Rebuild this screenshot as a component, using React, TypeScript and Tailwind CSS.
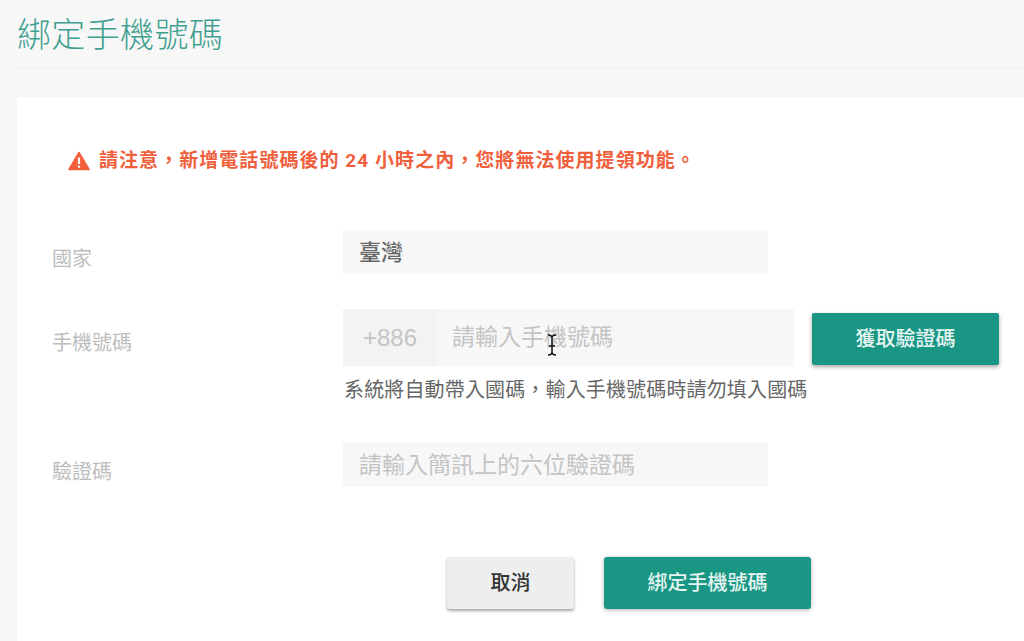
const cjk = "font-['Roboto','Noto_Sans_CJK_TC',sans-serif]";

function Label({ children, className }: { children: string; className: string }) {
  return <div className={`w-[326px] shrink-0 pl-[35px] text-[20px] leading-[28px] text-[#bdbdbd] ${className}`}>{children}</div>;
}

export default function App() {
  return (
    <div className={`h-[641px] w-[1024px] overflow-hidden bg-[#f7f7f7] pl-[17px] ${cjk}`}>
      <header className="h-[68px] border-b border-[#f0f0f0] pt-[11px]">
        <h1 className="text-[34px] font-light leading-[48px] tracking-[0.35px] text-[#3f9f90]">綁定手機號碼</h1>
      </header>

      <main className="mt-[29px] h-[544px] bg-white pt-[51px]">
        <div className="ml-[51px] flex h-[26px] items-center gap-[9px] text-[#f0603c]">
          <svg width="22" height="20" viewBox="0 0 22 20" className="shrink-0">
            <path d="M11 1.5 L21 18.5 H1 Z" fill="#f0603c" stroke="#f0603c" strokeWidth="1.6" strokeLinejoin="round" />
            <rect x="9.9" y="6.5" width="2.2" height="6.5" rx="0.6" fill="#fff" />
            <rect x="9.9" y="14.5" width="2.2" height="2.2" rx="0.6" fill="#fff" />
          </svg>
          <p className="text-[19px] font-bold leading-[26px] tracking-[1.05px] whitespace-nowrap">請注意，新增電話號碼後的 24 小時之內，您將無法使用提領功能。</p>
        </div>

        <div className="mt-[56px] flex items-start">
          <Label className="mt-[15px]">國家</Label>
          <div className="flex h-[44px] w-[425px] items-center bg-[#f7f7f7] px-4 text-[22px] font-medium text-[#666666]">臺灣</div>
        </div>

        <div className="mt-[35px] flex items-start">
          <Label className="mt-[20px]">手機號碼</Label>
          <div className="w-[464px]">
            <div className="relative flex h-[57px] w-[451px] items-center bg-[#f7f7f7] text-[23px]">
              <div className="flex h-full w-[94px] items-center justify-center bg-[#f3f3f3] font-['Liberation_Sans',sans-serif] text-[24px] text-[#c4c4c4]">+886</div>
              <div className="pt-px pl-[15px] text-[#c4c4c4]">請輸入手機號碼</div>
              <svg width="12" height="24" viewBox="0 0 12 24" className="absolute left-[203px] top-[24px]" fill="none" stroke="#111" strokeWidth="1.5">
                <path d="M2 2 C4 2 6 3 6 5 C6 3 8 2 10 2 M6 5 V19 M2 22 C4 22 6 21 6 19 C6 21 8 22 10 22 M3 13 H9" />
              </svg>
            </div>
            <p className="mt-[11px] pl-px text-[20px] leading-[26px] tracking-[0.15px] whitespace-nowrap text-[#666666]">系統將自動帶入國碼，輸入手機號碼時請勿填入國碼</p>
          </div>
          <button className="mt-[4px] ml-[5px] h-[52px] w-[187px] rounded-[2px] bg-[#199784] text-[20px] font-medium text-[#e6f5f2] shadow-[0_2px_4px_rgba(0,0,0,0.35)]">獲取驗證碼</button>
        </div>

        <div className="mt-[40px] flex items-start">
          <Label className="mt-[15px]">驗證碼</Label>
          <div className="flex h-[44px] w-[425px] items-center bg-[#f7f7f7] px-4 pt-[3px] text-[23px] text-[#c4c4c4]">請輸入簡訊上的六位驗證碼</div>
        </div>

        <div className="mt-[70px] ml-[430px] flex gap-[30px]">
          <button className="h-[52px] w-[127px] rounded-[3px] bg-[#eeeeee] text-[20px] font-medium text-[#333333] shadow-[0_2px_3px_rgba(0,0,0,0.35)]">取消</button>
          <button className="h-[52px] w-[207px] rounded-[3px] bg-[#199784] text-[20px] font-medium text-[#e6f5f2] shadow-[0_1px_4px_rgba(0,0,0,0.3)]">綁定手機號碼</button>
        </div>
      </main>
    </div>
  );
}
